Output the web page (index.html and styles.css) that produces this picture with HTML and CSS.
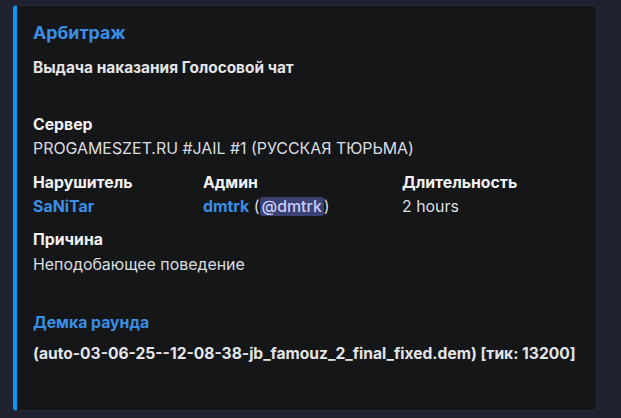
FILE: index.html
```
<!DOCTYPE html>
<html>
<head>
    <title>Арбитраж</title>
<link rel="stylesheet" href="styles.css">
</head>
<body>
    <div class="embed">
        <div class="embed-title">Арбитраж</div>
        <div class="embed-desc">Выдача наказания Голосовой чат</div>

        <div class="field field-server">
            <div class="field-name">Сервер</div>
            <div class="field-value">PROGAMESZET.RU #JAIL #1 (РУССКАЯ ТЮРЬМА)</div>
        </div>

        <div class="field-row">
            <div class="field">
                <div class="field-name">Нарушитель</div>
                <div class="field-value"><span class="link">SaNiTar</span></div>
            </div>
            <div class="field">
                <div class="field-name">Админ</div>
                <div class="field-value"><span class="link">dmtrk</span> (<span class="mention">@dmtrk</span>)</div>
            </div>
            <div class="field">
                <div class="field-name">Длительность</div>
                <div class="field-value">2 hours</div>
            </div>
        </div>

        <div class="field">
            <div class="field-name">Причина</div>
            <div class="field-value">Неподобающее поведение</div>
        </div>

        <div class="field field-demo">
            <div class="field-name link">Демка раунда</div>
            <div class="field-value demo-value">(auto-03-06-25--12-08-38-jb_famouz_2_final_fixed.dem) [тик: 13200]</div>
        </div>
    </div>
</body>
</html>
```

FILE: styles.css
```
body {
    margin: 0;
    padding: 5px 24px 7px 13px;
    background-color: #1f2030;
    font-family: Inter, "Noto Sans", sans-serif;
    color: #dbdee1;
}

.embed {
    box-sizing: border-box;
    width: 584px;
    height: 406px;
    padding: 16px 16px 16px 16px;
    background-color: #151618;
    border: 1px solid #2c2d32;
    border-left: 4px solid #0b98fb;
    border-radius: 4px;
}

.embed-title {
    font-size: 17.8px;
    font-weight: 700;
    line-height: 22px;
    color: #3a8ee6;
}

.embed-desc {
    margin-top: 14px;
    font-size: 15.4px;
    font-weight: 700;
    line-height: 20px;
    color: #e3e5e8;
}

.field-name {
    font-size: 15.8px;
    font-weight: 700;
    line-height: 20px;
    color: #f2f3f5;
}

.field-value {
    margin-top: 4px;
    font-size: 15.9px;
    line-height: 20px;
    color: #dbdee1;
}

.field-server {
    margin-top: 37px;
}

.field-row {
    display: grid;
    grid-template-columns: 170px 199px 1fr;
    margin-top: 14px;
    margin-bottom: 13px;
}

.field-row + .field .field-value {
    margin-top: 5px;
}

.link {
    color: #3a8ee6;
    font-weight: 700;
}

.mention {
    padding: 0 2px;
    border-radius: 3px;
    background-color: #3b4172;
    color: #c9cdfb;
    font-weight: 500;
}

.field-demo {
    margin-top: 38px;
}

.demo-value {
    margin-top: 11px;
    font-size: 15.6px;
    font-weight: 700;
    color: #e3e5e8;
}
```
